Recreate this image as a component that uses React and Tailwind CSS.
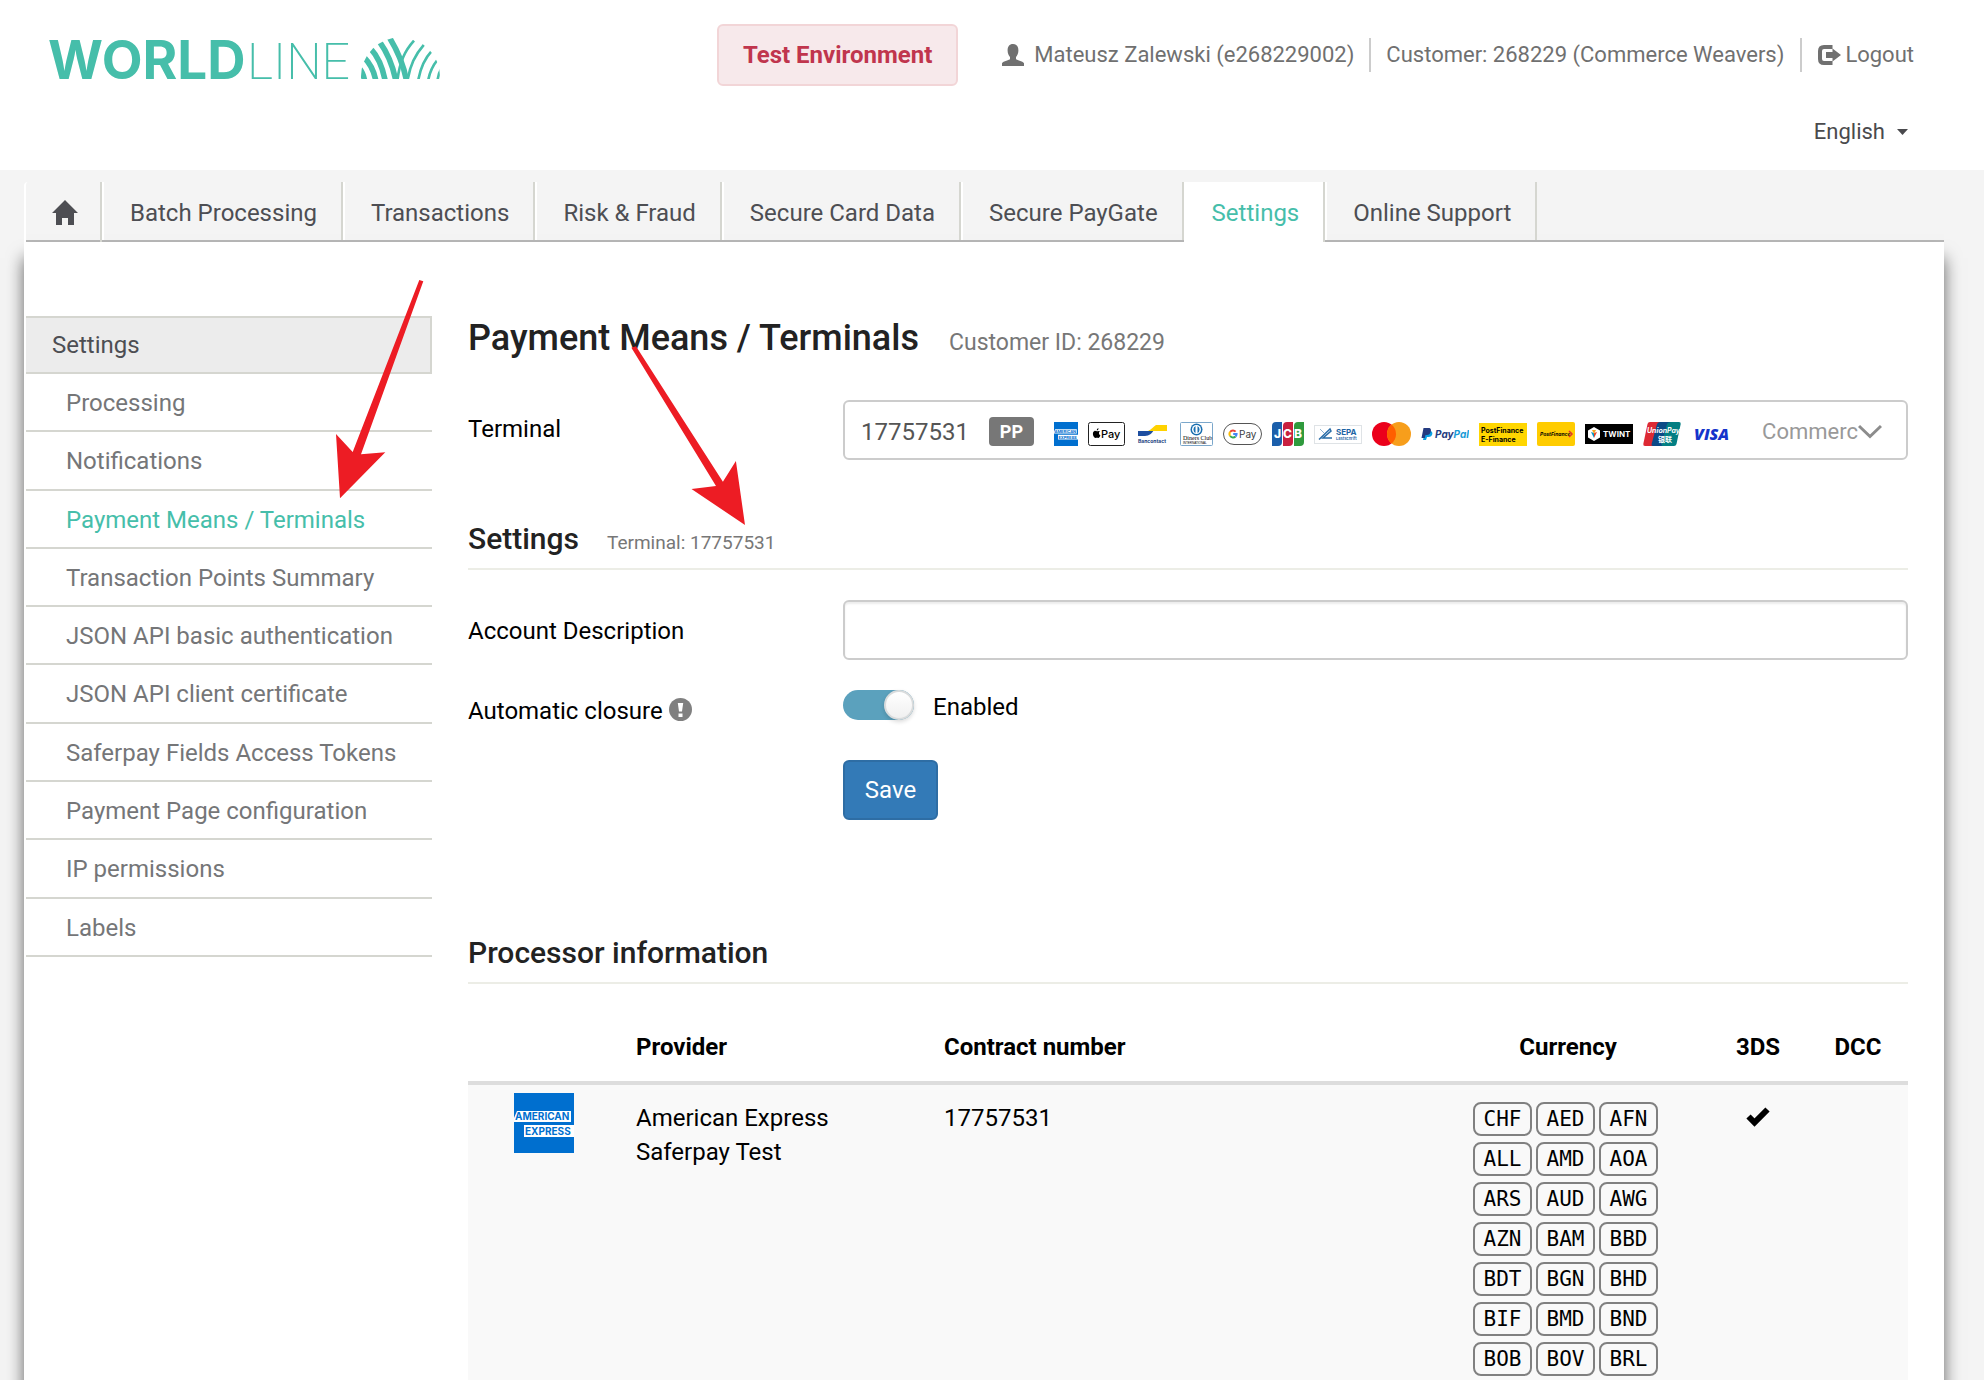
const tabs = ['Batch Processing', 'Transactions', 'Risk & Fraud', 'Secure Card Data', 'Secure PayGate', 'Settings', 'Online Support']

const menu = [
  'Processing',
  'Notifications',
  'Payment Means / Terminals',
  'Transaction Points Summary',
  'JSON API basic authentication',
  'JSON API client certificate',
  'Saferpay Fields Access Tokens',
  'Payment Page configuration',
  'IP permissions',
  'Labels',
]

const currencies = [
  'CHF', 'AED', 'AFN', 'ALL', 'AMD', 'AOA', 'ARS', 'AUD', 'AWG', 'AZN', 'BAM',
  'BBD', 'BDT', 'BGN', 'BHD', 'BIF', 'BMD', 'BND', 'BOB', 'BOV', 'BRL',
]

function WorldlineLogo() {
  return (
    <svg width="400" height="76" viewBox="0 0 400 76" fill="#46beaa" role="img" aria-label="Worldline">
      <text x="0" y="62" fontFamily="Inter, sans-serif" fontWeight="700" fontSize="53">WORLD</text>
      <text x="199" y="62" fontFamily="Roboto, sans-serif" fontWeight="200" fontSize="50">LINE</text>
      <g transform="translate(302 13) scale(0.3333)">
        <clipPath id="dome">
          <path d="M33 147V140A118 118 0 0 1 270 140V147Z" />
        </clipPath>
        <g clipPath="url(#dome)" fill="none" stroke="#46beaa">
          <g strokeWidth="17">
            <path d="M118 22C138 55 160 95 170 155" />
            <path d="M88 34C110 65 128 100 138 155" />
            <path d="M62 56C84 80 98 110 106 155" />
            <path d="M42 82C60 100 72 120 78 155" />
            <path d="M26 112C36 124 42 136 44 155" />
          </g>
          <g strokeWidth="8">
            <path d="M192 32C165 62 148 95 142 155" />
            <path d="M222 44C195 75 180 105 172 155" />
            <path d="M246 62C220 90 210 118 204 155" />
            <path d="M262 90C246 110 238 128 234 155" />
            <path d="M274 116C266 128 264 140 262 155" />
          </g>
        </g>
      </g>
    </svg>
  )
}

function UserIcon() {
  return (
    <svg width="22" height="22" viewBox="0 0 22 22" fill="currentColor" aria-hidden="true">
      <path d="M11 0C14.600 0 16.400 2.400 16.400 6.600C16.400 9.600 15.300 11.600 14 13V15C14 16 21 17.200 22 19.200V22H0V19.200C1 17.200 8 16 8 15V13C6.700 11.600 5.600 9.600 5.600 6.600C5.600 2.400 7.400 0 11 0Z" />
    </svg>
  )
}

function LogoutIcon() {
  return (
    <svg width="24" height="20" viewBox="0 0 24 20" aria-hidden="true">
      <path d="M14.500 2H6Q2 2 2 6V14Q2 18 6 18H14.500" fill="none" stroke="currentColor" strokeWidth="4" />
      <path d="M8 7H14.500V3.500L23 10L14.500 16.500V13H8Z" fill="currentColor" />
    </svg>
  )
}

function HomeIcon() {
  return (
    <svg width="26" height="25" viewBox="0 0 26 25" fill="currentColor" aria-hidden="true">
      <path d="M13 0L26 13H22V25H16V18H10V25H4V13H0Z" />
    </svg>
  )
}

function AmexLogo({ size }) {
  return (
    <svg width={size} height={size} viewBox="0 0 60 60" role="img" aria-label="American Express">
      <path d="M0 0H60V60H0Z" fill="#006fcf" />
      <path d="M3 18H57V29H0V25ZM10 32H60V44H10Z" fill="#fff" />
      <g fontFamily="Inter, sans-serif" fontWeight="700" fontSize="10" fill="#006fcf">
        <text x="1" y="27">AMERICAN</text>
        <text x="11" y="42">EXPRESS</text>
      </g>
    </svg>
  )
}

function PaymentLogos() {
  return (
    <span className="flex shrink-0 items-center gap-[10px] pt-[5px]">
      <AmexLogo size={24} />
      <svg width="37" height="24" viewBox="0 0 37 24" role="img" aria-label="Apple Pay">
        <rect x="0.500" y="0.500" width="36" height="23" rx="2" fill="#fff" stroke="#222" />
        <path d="M11.800 9.200C10.800 8.500 9.800 9.300 9 9.300C8.200 9.300 7.400 8.600 6.500 8.900C4.300 9.700 4.700 13.200 6 15C7.100 16.500 7.800 15.700 8.900 15.700C10 15.700 10.600 16.400 11.600 15C12.100 14.300 12.400 13.600 12.400 13.400C10.700 12.600 10.500 10.300 11.800 9.200ZM10.500 6.300C9.300 6.600 8.700 7.500 8.800 8.500C9.900 8.400 10.600 7.500 10.500 6.300Z" />
        <text x="13" y="16" fontFamily="Inter, sans-serif" fontWeight="500" fontSize="11">Pay</text>
      </svg>
      <svg width="35" height="24" viewBox="0 0 35 24" role="img" aria-label="Bancontact">
        <path d="M3 9H14L20 6C18 11 14 14 10 14H3Z" fill="#1e4fa0" />
        <path d="M32 3H21C19 4 16 8 13 9H32Z" fill="#ffd200" />
        <text x="3" y="21" fontFamily="Inter, sans-serif" fontWeight="700" fontSize="5" fill="#123a7c">Bancontact</text>
      </svg>
      <svg width="33" height="24" viewBox="0 0 33 24" role="img" aria-label="Diners Club International">
        <rect x="0.500" y="0.500" width="32" height="23" rx="1" fill="#fff" stroke="#7ba7cb" />
        <circle cx="16.500" cy="7.500" r="6" fill="#1a6fb0" />
        <circle cx="16.500" cy="7.500" r="4.500" fill="#fff" />
        <path d="M15.500 4A4 4 0 0 0 15.500 11ZM17.500 4A4 4 0 0 1 17.500 11Z" fill="#1a6fb0" />
        <text x="3" y="18" fontFamily="Liberation Serif, serif" fontSize="6">Diners Club</text>
        <text x="3" y="22" fontFamily="Liberation Sans, sans-serif" fontSize="3">INTERNATIONAL</text>
      </svg>
      <svg width="39" height="24" viewBox="0 0 39 24" role="img" aria-label="Google Pay">
        <rect x="0.500" y="1.500" width="38" height="21" rx="10.500" fill="#fff" stroke="#555" />
        <g fill="none" strokeWidth="2">
          <path d="M12.600 9.600A3.500 3.500 0 0 0 7.200 9.800" stroke="#ea4335" />
          <path d="M7.200 9.800A3.500 3.500 0 0 0 7.200 14" stroke="#fbbc04" />
          <path d="M7.200 14A3.500 3.500 0 0 0 12.500 14.500" stroke="#34a853" />
          <path d="M12.500 14.500A3.500 3.500 0 0 0 13.600 12H10.200" stroke="#4285f4" />
        </g>
        <text x="16" y="16" fontFamily="Inter, sans-serif" fontSize="10" fill="#3c4043">Pay</text>
      </svg>
      <svg width="32" height="24" viewBox="0 0 32 24" role="img" aria-label="JCB">
        <path d="M4 0H10V20Q10 24 6 24H0V4Q0 0 4 0Z" fill="#1b5fab" />
        <path d="M15 0H21V20Q21 24 17 24H11V4Q11 0 15 0Z" fill="#c8203f" />
        <path d="M26 0H32V20Q32 24 28 24H22V4Q22 0 26 0Z" fill="#2f9a3d" />
        <g fontFamily="Inter, sans-serif" fontWeight="800" fontSize="12" fill="#fff">
          <text x="2" y="16">J</text>
          <text x="11" y="16">C</text>
          <text x="22" y="16">B</text>
        </g>
      </svg>
      <svg width="48" height="19" viewBox="0 0 48 19" role="img" aria-label="SEPA Lastschrift">
        <rect x="0.500" y="0.500" width="47" height="18" fill="#fff" stroke="#dfe3e6" />
        <path d="M5 14.500L16 4L17 6L9 13H18" fill="none" stroke="#2a6da8" strokeWidth="1.500" />
        <path d="M6 4L10 8" stroke="#8fb4d2" />
        <text x="22" y="10" fontFamily="Inter, sans-serif" fontWeight="700" fontSize="8" fill="#1d64a4">SEPA</text>
        <text x="22" y="15" fontFamily="Inter, sans-serif" fontWeight="600" fontSize="4" fill="#1d64a4">Lastschrift</text>
      </svg>
      <svg width="39" height="24" viewBox="0 0 39 24" role="img" aria-label="Mastercard">
        <circle cx="12" cy="12" r="12" fill="#eb001b" />
        <circle cx="27" cy="12" r="12" fill="#f79e1b" />
        <path d="M19.500 2.600A12 12 0 0 1 19.500 21.400A12 12 0 0 1 19.500 2.600Z" fill="#ff5f00" />
      </svg>
      <svg width="48" height="24" viewBox="0 0 48 24" role="img" aria-label="PayPal">
        <path d="M4 9H9C11 9 12 11 11 13C10 15 8 15 6 15L5 18H2Z" fill="#0aa0e3" />
        <path d="M2.500 6H7.500C10 6 10.500 8 9.500 10.500C8.500 13 6.500 13 4.500 13L3.800 16H0.500Z" fill="#253b80" />
        <text y="16" fontFamily="Inter, sans-serif" fontWeight="700" fontStyle="italic" fontSize="10">
          <tspan x="14" fill="#253b80">Pay</tspan>
          <tspan fill="#179bd7">Pal</tspan>
        </text>
      </svg>
      <svg width="48" height="23" viewBox="0 0 48 23" role="img" aria-label="PostFinance E-Finance">
        <path d="M0 0H48V23H0Z" fill="#ffd600" />
        <g fontFamily="Inter, sans-serif" fontWeight="700" fontSize="7">
          <text x="2" y="10">PostFinance</text>
          <text x="2" y="19">E-Finance</text>
        </g>
      </svg>
      <svg width="38" height="24" viewBox="0 0 38 24" role="img" aria-label="PostFinance Card">
        <rect width="38" height="24" rx="2" fill="#ffcc00" />
        <text x="3" y="14" fontFamily="Inter, sans-serif" fontWeight="700" fontStyle="italic" fontSize="5">PostFinance</text>
        <path d="M32 9L35 12L32 15" fill="none" stroke="#e5352c" strokeWidth="1.500" />
      </svg>
      <svg width="48" height="20" viewBox="0 0 48 20" role="img" aria-label="TWINT">
        <path d="M0 0H48V20H0Z" />
        <path d="M9 3L15 6.500V13.500L9 17L3 13.500V6.500Z" fill="#fff" />
        <path d="M6 8L9 14L9 9Z" fill="#0096c8" />
        <path d="M12 8L9 14L9 9Z" fill="#e8402c" />
        <path d="M7 6H11L9 10Z" fill="#f5a623" />
        <text x="18" y="13" fontFamily="Inter, sans-serif" fontWeight="700" fontSize="8" fill="#fff">TWINT</text>
      </svg>
      <svg width="38" height="24" viewBox="0 0 38 24" role="img" aria-label="UnionPay">
        <path d="M7 0H17L12 24H2Q0 24 0.300 22L4.500 2Q5 0 7 0Z" fill="#dd2a34" />
        <path d="M17 0H28L23 24H10Q8 24 8.600 22L14 2Q15 0 17 0Z" fill="#0b4a87" />
        <path d="M28 0H36Q38 0 37.700 2L33.500 22Q33 24 31 24H20Q18 24 18.600 22L24 2Q25 0 28 0Z" fill="#037f83" />
        <text x="4" y="11" fontFamily="Inter, sans-serif" fontWeight="700" fontStyle="italic" fontSize="7" fill="#fff">UnionPay</text>
        <text x="15" y="20" fontFamily="Noto Sans CJK SC, sans-serif" fontWeight="700" fontSize="7" fill="#fff">银联</text>
      </svg>
      <svg width="42" height="24" viewBox="0 0 42 24" role="img" aria-label="Visa">
        <text x="3" y="18" fontFamily="Open Sans, sans-serif" fontWeight="800" fontStyle="italic" fontSize="16" fill="#1434cb">VISA</text>
      </svg>
    </span>
  )
}

export default function App() {
  return (
    <div className="relative min-h-screen overflow-hidden bg-[#f4f4f4] font-['Roboto',sans-serif] text-2xl leading-[34px] text-black">
      <header className="h-[170px] bg-white pl-12 pr-[70px] pt-6 text-[22px] text-[#707070]">
        <div className="flex h-[62px] items-center justify-between">
          <a href="#home" className="block">
            <WorldlineLogo />
          </a>
          <div className="flex items-center">
            <strong className="mr-11 rounded-md border-2 border-[#f2d5d7] bg-[#f7e9eb] px-6 py-3 text-2xl leading-[34px] text-[#c0354d]">
              Test Environment
            </strong>
            <UserIcon />
            <span className="ml-[10px] mr-[15px]">Mateusz Zalewski (e268229002)</span>
            <span className="border-x-2 border-[#ccc] pl-[15px] pr-4">Customer: 268229 (Commerce Weavers)</span>
            <a href="#logout" className="ml-4 flex items-center gap-[3px]">
              <LogoutIcon />
              Logout
            </a>
          </div>
        </div>
        <div className="mt-[29px] flex justify-end">
          <button type="button" className="flex items-center gap-3 pr-[6px] text-[#4a4a4d]">
            English
            <svg width="11" height="6" viewBox="0 0 11 6" fill="currentColor" aria-hidden="true">
              <path d="M0 0H11L5.500 6Z" />
            </svg>
          </button>
        </div>
      </header>

      <div className="ml-6 mr-10 pt-3">
        <nav className="flex h-[60px] border-b-2 border-[#b7b7b7]">
          <a
            href="#home"
            aria-label="Home"
            className="flex h-[60px] w-[78px] items-center justify-center rounded-tl border-l-2 border-r-2 border-l-white border-r-[#d5d6d0] pl-[3px] text-[#4d4e53]"
          >
            <HomeIcon />
          </a>
          {tabs.map((tab) => (
            <a
              key={tab}
              href="#tab"
              className={
                tab === 'Settings'
                  ? 'h-[60px] border-l-2 border-r-2 border-l-white border-r-[#d5d6d0] bg-white pl-[26px] pr-6 pt-[14px] text-[#46beaa]'
                  : 'h-[58px] border-l-2 border-r-2 border-l-white border-r-[#d5d6d0] pl-[26px] pr-6 pt-[14px] text-[#4d4e53]'
              }
            >
              {tab}
            </a>
          ))}
        </nav>

        <div className="flex min-h-[1180px] bg-white pl-[2px] pr-9 shadow-[0_16px_16px_rgba(0,0,0,0.6)]">
          <aside className="mt-[74px] w-[406px] shrink-0">
            <h2 className="border-y-2 border-r-2 border-[#d5d6d0] bg-[#ececec] py-[10px] pl-[26px] text-[#4d4e53]">Settings</h2>
            <ul className="grid h-[583px] grid-rows-10">
              {menu.map((item) => (
                <li key={item} className="border-b-2 border-[#d5d6d0]">
                  <a
                    href="#item"
                    className={
                      item === 'Payment Means / Terminals'
                        ? 'block pl-10 pt-3 text-[#46beaa]'
                        : 'block pl-10 pt-3 text-[#757678]'
                    }
                  >
                    {item}
                  </a>
                </li>
              ))}
            </ul>
          </aside>

          <main className="ml-9 min-w-0 flex-1 pt-[76px]">
            <h1 className="flex items-baseline text-4xl font-medium text-[#222]">
              Payment Means / Terminals
              <small className="ml-[30px] text-[23px] font-normal leading-[34px] text-[#777]">Customer ID: 268229</small>
            </h1>

            <div className="mt-10 flex">
              <label htmlFor="terminal" className="w-[375px] shrink-0 pt-3">Terminal</label>
              <button
                id="terminal"
                type="button"
                aria-haspopup="listbox"
                className="flex h-[60px] min-w-0 flex-1 items-center rounded-md border-2 border-[#ccc] bg-white pl-4 pr-6 pt-[3px] text-[#555]"
              >
                17757531
                <span className="ml-5 mr-5 flex h-[29px] w-[45px] shrink-0 items-center justify-center rounded bg-[#777] text-lg font-bold leading-none text-white">
                  PP
                </span>
                <PaymentLogos />
                <span className="ml-auto text-[22px] text-[#999]">Commerc</span>
                <svg width="24" height="15" viewBox="0 0 24 15" fill="none" stroke="#8c8c8c" strokeWidth="3" aria-hidden="true">
                  <path d="M1 2L12 12.500L23 2" />
                </svg>
              </button>
            </div>

            <h2 className="mt-[62px] flex items-baseline border-b-2 border-[#ecede6] pb-3 text-3xl font-medium leading-[34px] text-[#222]">
              Settings
              <small className="ml-7 text-[19px] font-normal leading-6 text-[#777]">Terminal: 17757531</small>
            </h2>

            <form>
              <div className="mt-[30px] flex">
                <label htmlFor="description" className="w-[375px] shrink-0 pt-[14px]">Account Description</label>
                <input
                  id="description"
                  type="text"
                  className="h-[60px] min-w-0 flex-1 rounded-md border-2 border-[#ccc] bg-white px-5 shadow-[inset_0_2px_2px_rgba(0,0,0,0.075)]"
                />
              </div>
              <div className="mt-[30px] flex h-[70px]">
                <label htmlFor="closure" className="flex w-[375px] shrink-0 gap-[6px] pt-1">
                  Automatic closure
                  <svg className="mt-1" width="23" height="23" viewBox="0 0 23 23" aria-hidden="true">
                    <circle cx="11.500" cy="11.500" r="11.500" fill="#808080" />
                    <path d="M8.800 5H14.200L13 13.500H10ZM9.500 15.500H13.500V19H9.500Z" fill="#fff" />
                  </svg>
                </label>
                <input
                  id="closure"
                  type="checkbox"
                  role="switch"
                  defaultChecked
                  className="flex h-[30px] w-[71px] shrink-0 appearance-none justify-end rounded-full bg-[#5ba1bd] before:block before:size-[30px] before:rounded-full before:border-2 before:border-[#d9dbdc] before:bg-linear-to-b before:from-white before:to-[#f0f0f0] before:shadow-[0_2px_4px_rgba(0,0,0,0.15)] before:content-['']"
                />
                <span className="ml-[19px]">Enabled</span>
              </div>
              <button type="button" className="ml-[375px] h-[60px] w-[95px] rounded-md border-2 border-[#2e6da4] bg-[#337ab7] text-white">
                Save
              </button>
            </form>

            <h2 className="mt-[116px] border-b-2 border-[#ecede6] pb-3 text-3xl font-medium leading-[34px] text-[#222]">
              Processor information
            </h2>

            <table className="w-full table-fixed">
              <colgroup>
                <col className="w-[152px]" />
                <col className="w-[308px]" />
                <col />
                <col className="w-[280px]" />
                <col className="w-[100px]" />
                <col className="w-[100px]" />
              </colgroup>
              <thead>
                <tr className="border-b-4 border-[#ddd]">
                  <td />
                  <th className="px-4 pb-[17px] pt-[46px] text-left">Provider</th>
                  <th className="px-4 pb-[17px] pt-[46px] text-left">Contract number</th>
                  <th className="pb-[17px] pt-[46px]">Currency</th>
                  <th className="pb-[17px] pt-[46px]">3DS</th>
                  <th className="pb-[17px] pt-[46px]">DCC</th>
                </tr>
              </thead>
              <tbody>
                <tr className="bg-[#f9f9f9] align-top">
                  <td className="pt-2">
                    <div className="flex justify-center">
                      <AmexLogo size={60} />
                    </div>
                  </td>
                  <td className="px-4 pt-4">
                    American Express
                    <br />
                    Saferpay Test
                  </td>
                  <td className="px-4 pt-4">17757531</td>
                  <td className="pb-16 pt-[17px]">
                    <ul className="flex flex-wrap content-start gap-x-1 gap-y-[6px] pl-[45px] pr-10">
                      {currencies.map((code) => (
                        <li
                          key={code}
                          className="flex h-[34px] w-[59px] items-center justify-center rounded-lg border-2 border-[#808080] font-['DejaVu_Sans_Mono',monospace] text-[21px] leading-none"
                        >
                          {code}
                        </li>
                      ))}
                    </ul>
                  </td>
                  <td className="pt-[22px]">
                    <svg className="mx-auto" width="24" height="20" viewBox="0 0 24 20" role="img" aria-label="Yes">
                      <path d="M2.500 9.500L8.500 15.500L21.500 2.500" fill="none" stroke="#000" strokeWidth="6" />
                    </svg>
                  </td>
                  <td />
                </tr>
              </tbody>
            </table>
          </main>
        </div>
      </div>

      <svg className="pointer-events-none absolute left-[330px] top-[270px]" width="430" height="270" viewBox="330 270 430 270" fill="#ed1c24" aria-hidden="true">
        <path d="M419.300 280L423.300 281.300L361 454.300L385.300 452.300L340 498.300L336 434L352.700 452Z" />
        <path d="M631.400 347.700L636 346.300L722.900 481.700L735.900 461L745 525L691.500 489L716 486Z" />
      </svg>
    </div>
  )
}
